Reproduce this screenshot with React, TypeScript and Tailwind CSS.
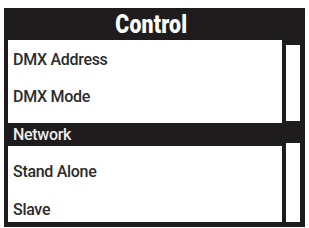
const items = ['DMX Address', 'DMX Mode', 'Network', 'Stand Alone', 'Slave']

export default function App() {
  const selected = 2

  return (
    <div className="w-[309px] h-[228px] bg-white pt-[8px] pl-[4px]" style={{ fontFamily: 'Roboto, "Liberation Sans", sans-serif' }}>
      <div className="w-[301px] h-[219px] bg-[#1e1c1c] flex flex-col pl-[4px] pr-[5px] pb-[5px]">

        {/* title */}
        <div className="h-[32px] flex items-center justify-center pr-[6px] pt-[1px]">
          <span className="text-white font-black text-[25px] leading-none scale-x-[0.85] tracking-[0.2px]">Control</span>
        </div>

        <div className="flex flex-1">
          {/* menu list */}
          <div className="w-[274px] bg-white flex flex-col pt-[8px] gap-[14.5px]">
            {items.map((item, i) => (
              <div
                key={item}
                className={
                  i === selected
                    ? 'w-full h-[23px] bg-[#1e1c1c] text-[#ededed] flex items-center pl-[5px]'
                    : 'w-full h-[23px] text-[#2b2b2b] flex items-center pl-[5px]'
                }
              >
                <span className="text-[16px] font-medium leading-none tracking-[-0.3px]">{item}</span>
              </div>
            ))}
          </div>

          {/* scrollbar */}
          <div className="w-[18px] pl-[4px] pt-[5px] flex flex-col">
            <div className="h-[76px] bg-white" />
            <div className="h-[22px]" />
            <div className="flex-1 bg-white" />
          </div>
        </div>

      </div>
    </div>
  )
}
